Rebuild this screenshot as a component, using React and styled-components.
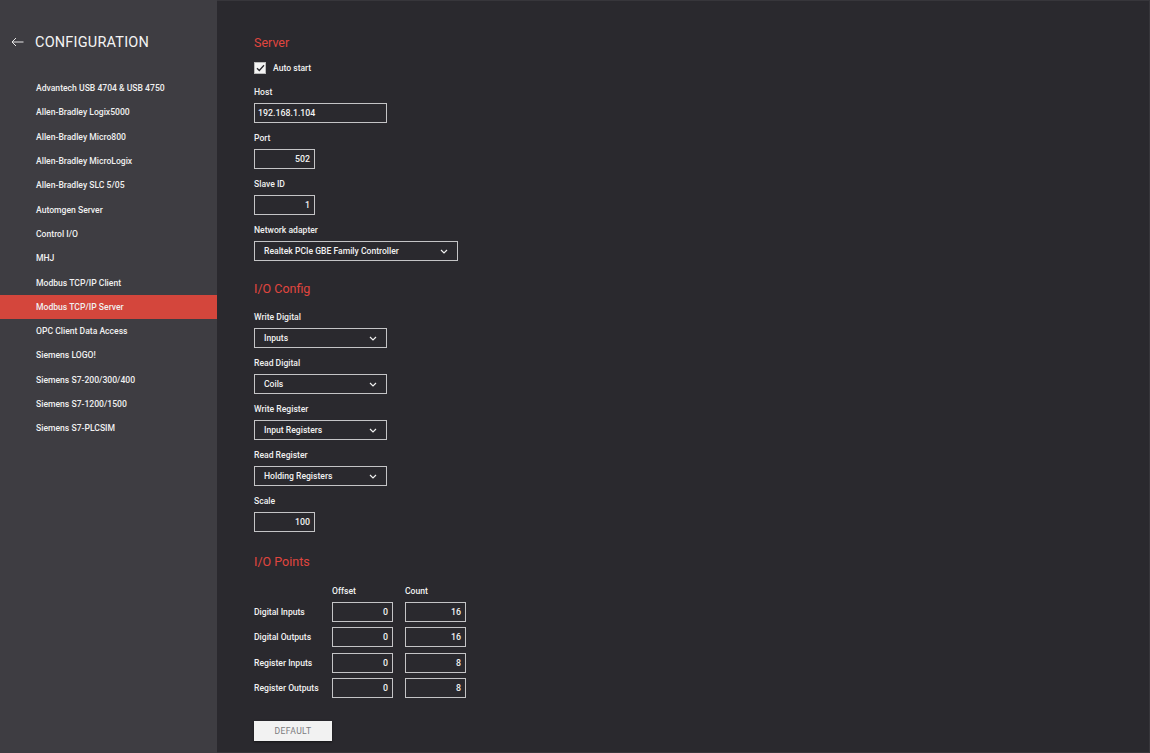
import React from "react";
import styled, { createGlobalStyle } from "styled-components";

const red = "#e0463f";
const active = "#d4463c";
const sideBg = "#3e3d42";
const mainBg = "#2a292e";
const border = "#c4c4c6";

const Global = createGlobalStyle`
  html, body {
    margin: 0;
    padding: 0;
    background: ${mainBg};
    font-family: Roboto, "Liberation Sans", sans-serif;
    color: #f2f2f2;
  }
  * { box-sizing: border-box; }
`;

const Page = styled.div`
  display: flex;
  width: 1150px;
  height: 753px;
  overflow: hidden;
`;

const Sidebar = styled.aside`
  width: 217px;
  flex-shrink: 0;
  background: ${sideBg};
  padding-top: 33px;
`;

const SideTitle = styled.div`
  display: flex;
  align-items: center;
  height: 18px;
  padding-left: 11px;
  margin-bottom: 25px;
  font-size: 14.5px;
  letter-spacing: 0.2px;
  color: #f4f4f4;
  svg {
    margin-right: 11px;
  }
`;

const NavItem = styled.div`
  height: 24.3px;
  display: flex;
  align-items: center;
  padding-left: 36px;
  font-size: 8.6px;
  font-weight: 500;
  color: #f0f0f0;
  background: ${(p) => (p.$active ? active : "transparent")};
`;

const Main = styled.main`
  flex: 1;
  background: ${mainBg};
  border: 1px solid #37363b;
  border-left: none;
  padding: 33px 0 0 37px;
`;

const Heading = styled.h2`
  margin: 0;
  height: 17px;
  line-height: 17px;
  font-size: 12.5px;
  font-weight: 400;
  color: ${red};
  margin-top: ${(p) => p.$top || 0}px;
  margin-bottom: ${(p) => p.$bottom || 11}px;
`;

const CheckRow = styled.label`
  display: flex;
  align-items: center;
  height: 12px;
  margin-bottom: 12px;
  font-size: 8.6px;
  font-weight: 500;
`;

const Box = styled.span`
  width: 12px;
  height: 12px;
  background: #f4f4f4;
  border: 1px solid #bbb;
  display: flex;
  align-items: center;
  justify-content: center;
  margin-right: 7px;
`;

const Field = styled.div`
  margin-bottom: 9px;
`;

const Label = styled.div`
  height: 12px;
  line-height: 12px;
  font-size: 8.6px;
  font-weight: 500;
  margin-bottom: 5px;
  color: #f0f0f0;
`;

const Input = styled.div`
  width: ${(p) => p.$w}px;
  height: 20px;
  border: 1px solid ${border};
  display: flex;
  align-items: center;
  justify-content: ${(p) => (p.$right ? "flex-end" : "flex-start")};
  padding: 0 4px 0 3px;
  font-size: 8.8px;
  font-weight: 500;
  color: #f2f2f2;
`;

const Select = styled.div`
  width: ${(p) => p.$w}px;
  height: 20px;
  border: 1px solid ${border};
  display: flex;
  align-items: center;
  justify-content: space-between;
  padding: 0 9px 0 9px;
  font-size: 8.6px;
  font-weight: 500;
  color: #f2f2f2;
`;

const PointsGrid = styled.div`
  display: grid;
  grid-template-columns: 66px 61px 61px;
  column-gap: 12px;
  row-gap: 5.5px;
  align-items: center;
  margin-bottom: 21px;
`;

const ColHead = styled.div`
  font-size: 8.6px;
  font-weight: 500;
  height: 12px;
  line-height: 12px;
  margin-bottom: -1px;
`;

const RowLabel = styled.div`
  font-size: 8.6px;
  font-weight: 500;
  white-space: nowrap;
`;

const Button = styled.button`
  width: 78px;
  height: 20px;
  border: none;
  background: #f2f2f2;
  color: #7b7b7e;
  font-family: Roboto, "Liberation Sans", sans-serif;
  font-size: 8.6px;
  letter-spacing: 0.4px;
  padding: 0;
  box-shadow: 0 1px 2px rgba(0, 0, 0, 0.5);
`;

const Chevron = () => (
  <svg width="8" height="5" viewBox="0 0 8 5">
    <path d="M1 1l3 3 3-3" fill="none" stroke="#f0f0f0" strokeWidth="1.2" />
  </svg>
);

const devices = [
  "Advantech USB 4704 & USB 4750",
  "Allen-Bradley Logix5000",
  "Allen-Bradley Micro800",
  "Allen-Bradley MicroLogix",
  "Allen-Bradley SLC 5/05",
  "Automgen Server",
  "Control I/O",
  "MHJ",
  "Modbus TCP/IP Client",
  "Modbus TCP/IP Server",
  "OPC Client Data Access",
  "Siemens LOGO!",
  "Siemens S7-200/300/400",
  "Siemens S7-1200/1500",
  "Siemens S7-PLCSIM",
];

const ioSelects = [
  ["Write Digital", "Inputs"],
  ["Read Digital", "Coils"],
  ["Write Register", "Input Registers"],
  ["Read Register", "Holding Registers"],
];

const points = [
  ["Digital Inputs", "0", "16"],
  ["Digital Outputs", "0", "16"],
  ["Register Inputs", "0", "8"],
  ["Register Outputs", "0", "8"],
];

export default function App() {
  return (
    <Page>
      <Global />
      <Sidebar>
        <SideTitle>
          <svg width="13" height="10" viewBox="0 0 13 10">
            <path
              d="M12.5 5H1.2M5 1L1 5l4 4"
              fill="none"
              stroke="#e8e8e8"
              strokeWidth="1"
            />
          </svg>
          CONFIGURATION
        </SideTitle>
        {devices.map((d) => (
          <NavItem key={d} $active={d === "Modbus TCP/IP Server"}>
            {d}
          </NavItem>
        ))}
      </Sidebar>
      <Main>
        <Heading>Server</Heading>
        <CheckRow>
          <Box>
            <svg width="9" height="8" viewBox="0 0 9 8">
              <path d="M1 4.2l2.3 2.3L8 1.2" fill="none" stroke="#2a292e" strokeWidth="1.3" />
            </svg>
          </Box>
          Auto start
        </CheckRow>
        <Field>
          <Label>Host</Label>
          <Input $w={133}>192.168.1.104</Input>
        </Field>
        <Field>
          <Label>Port</Label>
          <Input $w={61} $right>502</Input>
        </Field>
        <Field>
          <Label>Slave ID</Label>
          <Input $w={61} $right>1</Input>
        </Field>
        <Field>
          <Label>Network adapter</Label>
          <Select $w={204}>
            Realtek PCIe GBE Family Controller
            <Chevron />
          </Select>
        </Field>
        <Heading $top={19} $bottom={14}>I/O Config</Heading>
        {ioSelects.map(([l, v]) => (
          <Field key={l}>
            <Label>{l}</Label>
            <Select $w={133}>
              {v}
              <Chevron />
            </Select>
          </Field>
        ))}
        <Field>
          <Label>Scale</Label>
          <Input $w={61} $right>100</Input>
        </Field>
        <Heading $top={21} $bottom={15}>I/O Points</Heading>
        <PointsGrid>
          <div />
          <ColHead>Offset</ColHead>
          <ColHead>Count</ColHead>
          {points.map(([l, o, c]) => (
            <React.Fragment key={l}>
              <RowLabel>{l}</RowLabel>
              <Input $w={61} $right>{o}</Input>
              <Input $w={61} $right>{c}</Input>
            </React.Fragment>
          ))}
        </PointsGrid>
        <Button>DEFAULT</Button>
      </Main>
    </Page>
  );
}
